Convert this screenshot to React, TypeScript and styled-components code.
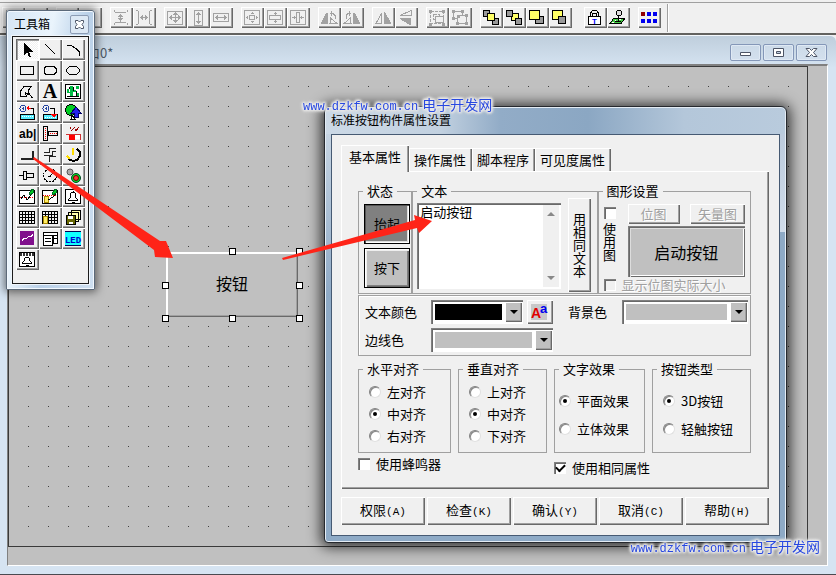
import React, { ReactNode, useState } from "react";
import styled, { createGlobalStyle, css } from "styled-components";

const GlobalStyle = createGlobalStyle`
  * { box-sizing: border-box; }
  body { margin: 0; background: #f0f0f0; overflow: hidden; }
  button, input, textarea, select, legend, label { font: inherit; color: inherit; }
`;

const cjk = `"Noto Sans CJK SC", sans-serif`;

const raised = css`
  box-shadow: inset 1px 1px #fff, inset -1px -1px #696969, inset -2px -2px #a0a0a0;
`;
const sunken = css`
  box-shadow: inset 1px 1px #808080, inset 2px 2px #696969, inset -1px -1px #fff;
`;

const Page = styled.div`
  position: relative;
  display: flex;
  flex-direction: column;
  height: 100vh;
  overflow: hidden;
  font: 13px/14px ${cjk};
  color: #000;
`;

/* ---------- toolbar ---------- */

const Toolbar = styled.div`
  display: flex;
  height: 35px;
  flex: none;
  background: #f0f0f0;
  border-bottom: 2px solid #63625f;
`;
const ToolbarInner = styled.div`
  display: flex;
  flex: 1;
  gap: 8px;
  margin-top: 2px;
  padding: 4px 0 0 2px;
  border-top: 1px solid #a0a0a0;
`;
const ToolGroup = styled.div<{ $apart: boolean }>`
  display: flex;
  margin-left: ${(p) => (p.$apart ? 4 : 0)}px;
`;
const ToolEnd = styled.div`
  width: 2px;
  margin: -3px 0 1px -2px;
  border-left: 1px solid #a0a0a0;
  background: #fff;
`;
const IconButton = styled.button<{ $pressed?: boolean }>`
  display: block;
  width: 23px;
  height: 21px;
  padding: 0;
  border: 0;
  background: ${(p) => (p.$pressed ? "repeating-conic-gradient(#fff 0 25%, #f0f0f0 0 50%) 0 0 / 2px 2px" : "#f0f0f0")};
  ${(p) =>
    p.$pressed
      ? css`box-shadow: inset 1px 1px #696969, inset 2px 2px #a0a0a0, inset -1px -1px #fff;`
      : raised}
`;
const Glyph = styled.svg`
  display: block;
  width: 23px;
  height: 21px;
  fill: none;
  stroke-width: 1;
  shape-rendering: crispEdges;
`;

const G = "#a2a2a2";
const up = (x: number, y: number) => `M${x} ${y}l-2 3h5l-2 -3z`;
const down = (x: number, y: number) => `M${x} ${y}l-2 -3h5l-2 3z`;
const left = (x: number, y: number) => `M${x} ${y}l3 -2v5l-3 -2z`;
const right = (x: number, y: number) => `M${x} ${y}l-3 -2v5l3 -2z`;

const alignIcons: Record<string, ReactNode> = {
  edges: <path stroke={G} d="M4.5 3v15M7 6.5h9M7 13.5h6" />,
  stackV: (
    <>
      <path stroke={G} d="M4.5 3v2M5 5.5h11M17.5 3v2M4.5 18v-2M5 15.5h11M17.5 18v-2M10.5 7v8" />
      <path fill={G} d={up(10, 7) + down(10, 14)} />
    </>
  ),
  stackH: (
    <>
      <path stroke={G} d="M3 3.5h2M5.5 4v13M3 17.5h2M19 3.5h-2M16.5 4v13M19 17.5h-2M7 10.5h8" />
      <path fill={G} d={left(7, 10) + right(15, 10)} />
    </>
  ),
  sizeBoth: (
    <>
      <path stroke={G} d="M3.5 4.5h15v13h-15zM11.5 6v10M5 10.5h12" />
      <path fill={G} d={up(11, 5) + down(11, 16) + left(5, 10) + right(17, 10)} />
    </>
  ),
  sizeV: (
    <>
      <path stroke={G} d="M7.5 3.5h8v15h-8zM11.5 6v10" />
      <path fill={G} d={up(11, 5) + down(11, 17)} />
    </>
  ),
  sizeH: (
    <>
      <path stroke={G} d="M3.5 6.5h15v8h-15zM6 10.5h10" />
      <path fill={G} d={left(5, 10) + right(17, 10)} />
    </>
  ),
  centerBoth: (
    <>
      <path stroke={G} d="M3.5 3.5h15v14h-15zM8.5 8.5h5v4h-5zM11.5 5v2M11.5 14v2M5 10.5h2M15 10.5h2" />
      <path fill={G} d="M10 6h3v1h-3zM10 14h3v1h-3zM6 9h1v3h-1zM15 9h1v3h-1z" />
    </>
  ),
  centerV: (
    <>
      <path stroke={G} d="M3.5 3.5h15v14h-15zM5.5 8.5h11v4h-11zM11.5 5v3M11.5 13v3" />
      <path fill={G} d="M10 6h3v1h-3zM10 14h3v1h-3z" />
    </>
  ),
  centerH: (
    <>
      <path stroke={G} d="M3.5 3.5h15v14h-15zM9.5 5.5h3v10h-3zM5 10.5h4M13 10.5h4" />
      <path fill={G} d="M7 9h1v3h-1zM14 9h1v3h-1z" />
    </>
  ),
  rotateL: (
    <>
      <path fill={G} d="M3 17V16L8 6h2v11z" />
      <path stroke={G} d="M12 16.5h7L12.5 11zM12 6.5h3l2 2v3M13.5 4v5" />
    </>
  ),
  rotateR: (
    <>
      <path fill={G} d="M19 17V16L14 6h-2v11z" />
      <path stroke={G} d="M10 16.5h-7L9.5 11zM10 6.5h-3l-2 2v3M8.5 4v5" />
    </>
  ),
  flipH: (
    <>
      <path stroke={G} d="M4 16.5h5.5V6z" />
      <path fill={G} d="M12 17V5h1l6 11v1z" />
    </>
  ),
  flipV: (
    <>
      <path stroke={G} d="M5 8.5h11V3.5z" />
      <path fill={G} d="M5 11h11v7h-1L5 12z" />
    </>
  ),
  group: (
    <>
      <path stroke={G} d="M4.5 4.5h13v12h-13zM7.5 7.5h6v5h-6z" strokeDasharray="3 1" />
      <path stroke={G} fill="#f0f0f0" d="M9.5 9.5h8v6h-8z" />
      <path fill={G} d="M3 3h3v3h-3zM16 3h3v3h-3zM3 16h3v3h-3zM16 16h3v3h-3z" />
    </>
  ),
  ungroup: (
    <>
      <path stroke={G} d="M4.5 4.5h9v7h-9z" />
      <path stroke={G} fill="#f0f0f0" d="M8.5 8.5h9v8h-9z" />
      <path fill={G} d="M3 3h3v3h-3zM12 3h3v3h-3zM3 10h3v3h-3zM16 7h3v3h-3zM7 15h3v3h-3zM16 15h3v3h-3zM8 8h3v3h-3z" />
    </>
  ),
  front: (
    <g stroke="#000">
      <path fill="#999" d="M3.5 3.5h6v6h-6zM12.5 11.5h6v6h-6z" />
      <path fill="#ff6" d="M7.5 6.5h7v7h-7z" />
    </g>
  ),
  back: (
    <g stroke="#000">
      <path fill="#ff6" d="M8.5 6.5h7v7h-7z" />
      <path fill="#999" d="M3.5 3.5h6v6h-6zM12.5 11.5h6v6h-6z" />
    </g>
  ),
  forward: (
    <g stroke="#000">
      <path fill="#999" d="M9.5 9.5h8v7h-8z" />
      <path fill="#ff6" d="M3.5 3.5h10v9h-10z" />
    </g>
  ),
  backward: (
    <g stroke="#000">
      <path fill="#ff6" d="M3.5 3.5h10v9h-10z" />
      <path fill="#999" d="M9.5 9.5h7v7h-7z" />
    </g>
  ),
  lock: (
    <>
      <path stroke="#000" fill="#fff" d="M4.5 9.5h12v8h-12z" />
      <path stroke="#000" d="M6.5 9V6L8.5 3.5h4L14.5 6v3M8.5 9V6.500h4V9" />
      <text x="10.5" y="17" textAnchor="middle" fontFamily="Liberation Sans" fontWeight="700" fontSize="8" fill="#00f">T</text>
    </>
  ),
  stamp: (
    <>
      <path fill="#4c4" stroke="#000" d="M3 16.5L7 11h11l-4 5.5z" />
      <path fill="#fff" d="M5 15h2v1h-2zM12 12h2v1h-2zM8 13h1v1h-1z" />
      <path fill="#ddd" stroke="#000" d="M10.5 3.5h3l1 1v3l-1 1h-3l-1-1v-3zM11.5 9v5M8 14.5h6" />
    </>
  ),
  grid: (
    <>
      <path fill="#900000" d="M3 5h4v4H3z" />
      <path fill="#0000f0" d="M9 5h4v4H9zM15 5h4v4h-4zM3 12h4v4H3zM9 12h4v4H9zM15 12h4v4h-4z" />
    </>
  ),
};

const toolbarGroups: string[][] = [
  ["edges", "edges"],
  ["edges", "edges"],
  ["stackV", "stackH"],
  ["sizeBoth", "sizeV", "sizeH"],
  ["centerBoth", "centerV", "centerH"],
  ["rotateL", "rotateR"],
  ["flipH", "flipV"],
  ["group", "ungroup"],
  ["front", "back", "forward", "backward"],
  ["lock", "stamp"],
  ["grid"],
];

/* ---------- document window ---------- */

const DocWindow = styled.section`
  display: flex;
  flex-direction: column;
  flex: 1;
  padding: 0 8px 8px 7px;
  border-top: 1px solid #f4f8fc;
  border-bottom: 1px solid #4a4a50;
  border-top-right-radius: 6px;
  background: linear-gradient(#bfcedc 0, #d6e4f2 32px);
`;
const DocTitle = styled.header`
  display: flex;
  align-items: center;
  justify-content: space-between;
  height: 28px;
  flex: none;
  padding: 5px 1px 0 80px;
  color: #4c5866;
`;
const DocControls = styled.div`
  display: flex;
  gap: 2px;
`;
const DocButton = styled.button`
  display: grid;
  place-items: center;
  width: 31px;
  height: 17px;
  padding: 0;
  border: 1px solid #8497b8;
  border-radius: 2px;
  background: linear-gradient(#ccdae8, #d3e0ee);
  box-shadow: inset 0 0 0 1px #dfe9f4;
`;
const Workspace = styled.main`
  flex: 1;
  padding: 0 19px 18px 0;
  border: 1px solid #808080;
  border-width: 2px 1px 1px 1px;
  border-right-color: #fff;
  border-bottom-color: #fff;
  background: #c0c0c0;
`;
const Sheet = styled.div`
  height: 100%;
  border: 1px solid #3a3a3a;
  background: conic-gradient(from 270deg at 1px 1px, #404040 90deg, transparent 0) -1px -1px / 20px 20px #c0c0c0;
`;

/* ---------- placed button on the sheet ---------- */

const PlacedButton = styled.div`
  position: absolute;
  left: 166px;
  top: 252px;
  display: grid;
  place-items: center;
  width: 132px;
  height: 65px;
  padding-bottom: 3px;
  background: #c0c0c0;
  border: 1px solid;
  border-color: #fff #696969 #696969 #fff;
  box-shadow: inset 1px 1px #fff, inset -1px -1px #a0a0a0;
  font-size: 16px;
`;
const Handle = styled.i<{ $x: string; $y: string }>`
  position: absolute;
  left: ${(p) => p.$x};
  top: ${(p) => p.$y};
  width: 7px;
  height: 7px;
  margin: -4px;
  border: 1px solid #000;
  background: #fff;
`;
const near = "-1px";
const mid = "calc(50% + 1px)";
const far = "calc(100% + 3px)";
const handles = [
  [mid, near], [far, near], [near, mid], [far, mid],
  [near, far], [mid, far], [far, far],
];

/* ---------- toolbox ---------- */

const Toolbox = styled.aside`
  position: absolute;
  left: 6px;
  top: 10px;
  padding: 1px 5px 5px;
  border: 1px solid #5c6a7a;
  border-radius: 3px 3px 1px 1px;
  background: linear-gradient(100deg, #d6e6f5 0, #eaf4fc 35%, #b9d0e8 60%, #cfe0f1 100%);
  box-shadow: inset 0 0 0 1px #f2f8fe, 0 0 8px 2px rgba(0, 0, 0, 0.5);
`;
const ToolboxTitle = styled.header`
  display: flex;
  align-items: center;
  justify-content: space-between;
  height: 24px;
  padding: 0 0 0 2px;
  font-size: 12px;
`;
const ToolboxClose = styled.button`
  display: grid;
  place-items: center;
  width: 19px;
  height: 19px;
  padding: 0;
  border: 1px solid #8c9cb4;
  border-radius: 2px;
  background: #dce8f4;
`;
const ToolboxGrid = styled.div`
  display: grid;
  grid-template-columns: repeat(3, 23px);
  grid-auto-rows: 21px;
  padding: 2px 3px 13px;
  border: 1px solid #1c1c1c;
  outline: 1px solid #f0f6fc;
  background: #f0f0f0;
`;

const dark = "#000";
const tools: [string, ReactNode][] = [
  ["选择", <path fill={dark} d="M8 4v12l3-3 2 5h2l-2-5h4z" />],
  ["直线", <path stroke={dark} d="M6 5l10 10" />],
  ["弧线", <path stroke={dark} d="M5 6.5h4l5 3 3 3v4" />],
  ["矩形", <path stroke={dark} d="M4.5 6.5h13v8h-13z" />],
  ["圆角矩形", <path stroke={dark} d="M7 6.5h8l2 2v4l-2 2H7l-2-2v-4z" />],
  ["椭圆", <ellipse stroke={dark} cx="11" cy="10.5" rx="6.5" ry="4.5" />],
  ["多边形", <path stroke={dark} d="M15.5 5.5H8L4.5 10v5.5h6L9.5 11.500M15.5 5.5L12.5 9v3l4 5M9.500 11.500l4 3" />],
  [
    "标签",
    <text x="11" y="17" textAnchor="middle" fontFamily="Liberation Serif" fontWeight="700" fontSize="20" fill={dark}>A</text>,
  ],
  [
    "位图",
    <>
      <path stroke={dark} fill="#fff" d="M3.5 3.5h15v14h-15z" />
      <path fill="#0b4" d="M8 5h3v11H8zM5 8h2v4H5zM5 11h4v1H5zM11 9h3v2h-3zM14 12h3v4h-3zM14 5h3v3h-3z" />
      <path stroke={dark} d="M5 15.5h12M11.5 6v4M14.5 10v5M7.500 6v2" />
    </>,
  ],
  [
    "输入",
    <>
      <circle cx="7" cy="6.5" r="3" stroke="#2244a0" />
      <path stroke="#2244a0" d="M6 6.5h2M7.5 5v3" />
      <path stroke="#f00" d="M11 6.5h4" />
      <path fill="#f00" d="M10 6l3-3v6z" />
      <path stroke={dark} d="M15 6.5h2.5v6" />
      <path stroke={dark} fill="#5ef" d="M4.5 12.5h14v5h-14z" />
      <path stroke="#fff" strokeDasharray="1 1" d="M6 14.5h12" />
    </>,
  ],
  [
    "输出",
    <>
      <circle cx="7" cy="6.5" r="3" stroke="#2244a0" />
      <path stroke="#2244a0" d="M6 6.5h2M7.5 5v3" />
      <path stroke={dark} d="M11 6.5h4.5v6" />
      <path stroke={dark} fill="#5ef" d="M4.5 12.5h14v5h-14z" />
      <path stroke="#fff" strokeDasharray="1 1" d="M6 15.5h12" />
      <path fill="#f00" d="M12 12h6l-3 4z" />
    </>,
  ],
  [
    "图元",
    <>
      <circle cx="9" cy="8" r="5.5" fill="#0c2" stroke={dark} />
      <path fill="#22e" stroke="#006" d="M14 5l5 6h-3v4h-4v-4H9z" />
      <path stroke={dark} fill="#fff" d="M9.5 12.5l4 5H9z" />
    </>,
  ],
  [
    "输入框",
    <text x="3" y="15" fontFamily="Liberation Sans" fontWeight="700" fontSize="12" fill={dark}>ab|</text>,
  ],
  [
    "滑动",
    <>
      <path stroke={dark} d="M4.5 3.5h4v14h-4zM9.5 8.5h9v4h-9z" />
      <path stroke="#f00" strokeDasharray="1 1" d="M6.5 5v12M11 10.5h7" />
    </>,
  ],
  [
    "百分比",
    <>
      <path stroke="#c33" d="M4 11.5h14.500v5" />
      <path fill="#f00" d="M7 12h6v5H7z" />
      <path fill="#fff" d="M13 12h5v4h-5z" />
      <path stroke="#900" d="M8.5 4v2M9 8l4-4M13.5 6v2M14 8l3-4" />
    </>,
  ],
  ["标准按钮", <path stroke="#222" strokeWidth="2" d="M5 15h12V7" />],
  ["管道", <path stroke="#222" d="M17 4.500H10.500V8.500H5M17 7.500h-4v4H5M17 12.500H10.500V17.500" />],
  [
    "旋转仪表",
    <>
      <path stroke={dark} strokeWidth="2" d="M15 5l3 3v4l-3 4-4 1-5-2" />
      <path stroke="#fd0" strokeWidth="2" d="M11 4v7M5 12l3 3" />
    </>,
  ],
  ["滑块", <path stroke={dark} d="M3 10.5h4M7.5 6.5h3v8h-3zM10.5 8.5h7v4h-7z" />],
  [
    "仪表",
    <>
      <circle cx="11" cy="10.5" r="6.5" stroke={dark} strokeDasharray="2 1" />
      <path stroke={dark} d="M11 11l3-3M9 11h3" />
    </>,
  ],
  [
    "指示灯",
    <g shapeRendering="auto">
      <circle cx="8" cy="7" r="3" fill="#aaa" stroke="#555" />
      <circle cx="14" cy="13" r="4.500" fill="#0d2" stroke="#042" />
      <circle cx="14" cy="13" r="2.500" fill="#f33" stroke="#600" />
    </g>,
  ],
  [
    "实时曲线",
    <>
      <path stroke={dark} fill="#fff" d="M3.5 4.5h15v13h-15z" />
      <path stroke="#f00" strokeDasharray="1 1" d="M4 11.5h14" />
      <path stroke={dark} d="M5 13l3-4 3 5 4-5" />
      <path fill="#0c2" stroke="#062" d="M13 8l3-5h2l-1 4-3 2z" />
    </>,
  ],
  [
    "历史曲线",
    <>
      <path stroke={dark} fill="#fff" d="M3.5 4.5h15v13h-15z" />
      <path stroke="#f00" strokeDasharray="1 1" d="M4 9.5h14" />
      <path fill="#fe6" stroke="#a80" d="M5.5 10.5h4v6h-4z" />
      <path stroke={dark} d="M9 14l5-3 3-3" />
      <path fill="#0c2" stroke="#062" d="M13 8l3-5h2l-1 4-3 2z" />
    </>,
  ],
  [
    "报警",
    <>
      <path stroke={dark} fill="#fff" d="M3.5 3.5h15v14h-15z" />
      <path stroke={dark} d="M11 4.500v2M9.500 6.500h3l1 1v4l2 2v1h-9v-1l2-2v-4zM10 16.500h3" />
    </>,
  ],
  ["表格", <path stroke={dark} d="M3.5 4.5h15v12h-15zM3 7.5h16M3 10.5h16M3 13.5h16M6.5 4v13M9.5 4v13M12.5 4v13M15.5 4v13" />],
  [
    "历史表格",
    <>
      <path stroke={dark} d="M3.5 4.5h15v12h-15zM3 7.5h16M3 10.5h16M3 13.5h16M6.5 4v13M9.5 4v13M12.5 4v13M15.5 4v13" />
      <path fill="#fe6" stroke="#a80" d="M4.5 9.5h4v7h-4z" />
    </>,
  ],
  [
    "存盘",
    <>
      <path fill="#ffa" stroke={dark} d="M9.5 3.5h9v9h-9zM6.5 5.5h10v9h-10z" />
      <path fill="#660" stroke={dark} d="M4.5 8.5h9v9h-9z" />
      <path fill="#fff" d="M6 9h5v3H6zM7 15h4v2H7z" />
    </>,
  ],
  [
    "曲线",
    <>
      <path fill="#80108c" d="M4 3h14v14H4z" />
      <path stroke="#fff" d="M6 13l2-3 2 1 3-3 2 1 2-3" />
    </>,
  ],
  [
    "组合框",
    <>
      <path stroke={dark} fill="#fff" d="M4.5 4.5h14v3h-14zM4.5 7.5h9v10h-9zM14.5 7.5h4v8h-4z" />
      <path stroke={dark} d="M6 10.5h6M6 13.5h6M15 10.5h3" />
    </>,
  ],
  [
    "数码管",
    <>
      <path fill="#1ff" d="M3 3h16v15h-16z" />
      <path stroke="#005" d="M3 3.5h16M3 17.500h16" />
      <text x="11" y="15" textAnchor="middle" fontFamily="Liberation Mono" fontWeight="700" fontSize="9" fill="#00c">LED</text>
    </>,
  ],
  [
    "报警显示",
    <>
      <path stroke={dark} fill="#fff" d="M3.5 3.5h15v14h-15z" />
      <path stroke="#333" strokeWidth="3" strokeDasharray="2 1" d="M4 5.500h15" />
      <path stroke={dark} d="M9.500 8.500h3l1 1v2l2 2v1h-9v-1l2-2v-2zM10 16.500h3" />
    </>,
  ],
];

/* ---------- property dialog ---------- */

const Dialog = styled.section`
  position: absolute;
  left: 324px;
  top: 106px;
  width: 463px;
  padding: 0 6px 6px;
  border: 1px solid #26292e;
  border-radius: 6px 6px 4px 4px;
  background:
    linear-gradient(#bccbdd, #d0dcea) right 27px / 6px 98px no-repeat,
    linear-gradient(#c6d4e2, #8faac6) left 27px / 6px 160px no-repeat,
    linear-gradient(90deg, #ccd9e6 0, #c2d1e0 25%, #92acc7 38%, #8ba7c3 57%, #b4c7da 78%, #b9cbdd 100%) top / 100% 28px no-repeat,
    #8eaac6;
  box-shadow: inset 0 0 0 1px #e4ecf4, 0 1px 14px 3px rgba(0, 0, 0, 0.75);
`;
const DialogTitle = styled.h1`
  height: 27px;
  margin: 0;
  font: 12px/25px ${cjk};
`;
const DialogBody = styled.form`
  padding: 10px 10px 10px 9px;
  border: 1px solid #465a73;
  background: #f0f0f0;
`;
const Tabs = styled.div`
  display: flex;
  align-items: flex-end;
`;
const Tab = styled.button<{ $active: boolean }>`
  position: relative;
  height: ${(p) => (p.$active ? 27 : 23)}px;
  margin-bottom: ${(p) => (p.$active ? -1 : 0)}px;
  padding: ${(p) => (p.$active ? "0 8px 4px" : "0 6px 0 5px")};
  border: 0;
  background: #f0f0f0;
  box-shadow: inset 1px 1px #fff, inset -1px 0 #696969, inset -2px 0 #a0a0a0;
  white-space: nowrap;
`;
const TabPage = styled.div`
  padding: 13px 18px 14px 17px;
  box-shadow: inset 1px 1px #fff, inset -1px -1px #696969, inset -2px -2px #a0a0a0;
`;
const Group = styled.fieldset`
  min-width: 0;
  margin: 0;
  padding: 0;
  border: 1px solid #a0a0a0;
`;
const Legend = styled.legend`
  margin-left: 4px;
  padding: 0 4px;
  line-height: 14px;
`;
const TopRow = styled.div`
  display: grid;
  grid-template-columns: 54fr 185fr 153fr;
  height: 110px;
`;
const StateList = styled.div`
  display: grid;
  gap: 4px;
  padding: 6px 1px 0 5px;
`;
const StateButton = styled.button<{ $dark?: boolean }>`
  height: 40px;
  padding: 0;
  border: 1px solid #000;
  background: ${(p) => (p.$dark ? "#808080" : "#c0c0c0")};
  ${(p) =>
    p.$dark
      ? css`box-shadow: inset 1px 1px #555, inset -1px -1px #fff, inset -2px -2px #ddd;`
      : css`box-shadow: inset 1px 1px #fff, inset 2px 2px #eee, inset -1px -1px #696969, inset -2px -2px #808080;`}
`;
const TextRow = styled.div`
  display: flex;
  justify-content: space-between;
  padding: 0 6px 0 4px;
`;
const TextBox = styled.div`
  display: flex;
  width: 144px;
  height: 86px;
  margin-top: 5px;
  padding: 2px;
  background: #fff;
  ${sunken}
`;
const TextInput = styled.textarea`
  flex: 1;
  min-width: 0;
  padding: 0 1px;
  border: 0;
  outline: 0;
  resize: none;
  background: none;
`;
const ScrollRail = styled.div`
  display: flex;
  flex-direction: column;
  justify-content: space-between;
  width: 16px;
  padding: 6px 3px;
  background: #f0f0f0;
`;
const VerticalButton = styled.button`
  width: 23px;
  height: 94px;
  padding: 0;
  border: 0;
  background: #f0f0f0;
  ${raised}
  writing-mode: vertical-rl;
`;
const GraphicGrid = styled.div`
  display: grid;
  grid-template-columns: 12px 1fr;
  column-gap: 12px;
  padding: 6px 5px 0;
`;
const TallCheck = styled.label`
  display: flex;
  flex-direction: column;
  align-items: center;
  gap: 3px;
  padding-top: 3px;
  white-space: pre-line;
  line-height: 13px;
`;
const Preview = styled.div`
  display: grid;
  place-items: center;
  height: 51px;
  margin-top: 2px;
  background: #c0c0c0;
  box-shadow: inset 1px 1px #808080, inset 2px 2px #696969, inset 3px 3px #ddd, inset -1px -1px #696969, inset -2px -2px #fff;
  font-size: 16px;
`;
const ImageButtons = styled.div`
  display: flex;
  justify-content: space-between;
`;
const ImageButton = styled.button`
  height: 20px;
  padding: 0 8px;
  min-width: 52px;
  border: 0;
  background: #f0f0f0;
  color: #a0a0a0;
  text-shadow: 1px 1px #fff;
  ${raised}
`;
const RealSize = styled.label`
  grid-column: 1 / -1;
  display: flex;
  align-items: center;
  gap: 6px;
  margin-top: 1px;
  color: #a0a0a0;
  text-shadow: 1px 1px #fff;
  white-space: nowrap;
`;
const CheckInput = styled.input.attrs({ type: "checkbox" })`
  appearance: none;
  display: grid;
  place-items: center;
  flex: none;
  width: 12px;
  height: 12px;
  margin: 0;
  background: #fff;
  ${sunken}
  &:disabled { background: #f0f0f0; }
  &:checked::before {
    content: "";
    width: 7px;
    height: 4px;
    border: solid #000;
    border-width: 0 0 2px 2px;
    transform: translateY(-1px) rotate(-45deg);
  }
`;
const ColorGroup = styled.div`
  display: grid;
  grid-template-columns: 62px 92px 26px 61px 1fr;
  row-gap: 4px;
  column-gap: 4px;
  align-items: center;
  margin-top: 1px;
  padding: 4px 2px 3px 6px;
  border: 1px solid #a0a0a0;
  box-shadow: inset 1px 1px #fff;
`;
const ColorLabel = styled.label<{ $inset?: boolean }>`
  padding-left: ${(p) => (p.$inset ? 11 : 0)}px;
  white-space: nowrap;
`;
const ColorBox = styled.div<{ $wide?: boolean }>`
  grid-column: ${(p) => (p.$wide ? "span 2" : "auto")};
  display: flex;
  height: 24px;
  padding: 2px 1px 2px 2px;
  background: #fff;
  ${sunken}
`;
const ColorSelect = styled.select`
  appearance: none;
  flex: 1;
  min-width: 0;
  margin: 2px 3px 2px 2px;
  padding: 0;
  border: 0;
  border-radius: 0;
  background: ${(p) => String(p.defaultValue)};
`;
const DropArrow = styled.span`
  display: grid;
  place-items: center;
  width: 17px;
  background: #c0c0c0;
  ${raised}
`;
const FontButton = styled.button`
  display: grid;
  place-items: center;
  height: 24px;
  padding: 0;
  border: 0;
  background: #f0f0f0;
  ${raised}
`;
const OptionGrid = styled.div<{ $top: number }>`
  display: grid;
  grid-template-columns: 93fr 89fr 91fr 99fr;
  column-gap: 7px;
  margin-top: ${(p) => p.$top}px;
`;
const RadioGroup = styled(Group)`
  height: 91px;
`;
const RadioList = styled.div<{ $loose: boolean }>`
  display: grid;
  row-gap: ${(p) => (p.$loose ? 14 : 8)}px;
  padding: ${(p) => (p.$loose ? "18px 0 0 4px" : "9px 0 0 10px")};
`;
const IndentedList = styled(RadioList)`
  padding-left: 10px;
`;
const Choice = styled.label<{ $side?: "start" | "end"; $span?: boolean }>`
  display: flex;
  align-items: center;
  align-self: ${(p) => p.$side ?? "auto"};
  grid-column: ${(p) => (p.$span ? "span 2" : "auto")};
  gap: 6px;
  white-space: nowrap;
`;
const RadioInput = styled.input.attrs({ type: "radio" })`
  appearance: none;
  display: grid;
  place-items: center;
  flex: none;
  width: 12px;
  height: 12px;
  margin: 0;
  border: 1px solid;
  border-color: #808080 #e0e0e0 #e0e0e0 #808080;
  border-radius: 50%;
  background: #fff;
  box-shadow: inset 1px 1px #888;
  &:checked::before {
    content: "";
    width: 4px;
    height: 4px;
    border-radius: 50%;
    background: #000;
  }
`;
const BottomChecks = styled(OptionGrid)`
  height: 18px;
`;
const Footer = styled.footer`
  display: grid;
  grid-template-columns: repeat(5, 1fr);
  gap: 2px;
  margin-top: 8px;
`;
const FooterButton = styled.button`
  height: 28px;
  padding: 0;
  border: 0;
  background: #f0f0f0;
  ${raised}
`;
const Key = styled.span`
  font: 11px/14px "Liberation Mono", monospace;
`;

/* ---------- overlays ---------- */

const Arrows = styled.svg`
  position: absolute;
  left: 0;
  top: 0;
  width: 100%;
  height: 100%;
  pointer-events: none;
  fill: #ff2418;
`;
const Watermark = styled.div<{ $corner?: boolean }>`
  position: absolute;
  ${(p) => (p.$corner ? "right: 16px; bottom: 16px;" : "left: 303px; top: 94px;")}
  display: flex;
  align-items: baseline;
  gap: 4px;
  line-height: 20px;
  font-size: 14px;
  color: #2848e0;
  white-space: nowrap;
  filter: drop-shadow(0 0 1px #eee) drop-shadow(0 0 1px #e8e8e8) drop-shadow(0 0 1px #e4e4e4) drop-shadow(0 0 1px #ddd);
`;
const Site = styled.span`
  font: 12px/20px "Liberation Mono", monospace;
`;

const Mark = ({ corner }: { corner?: boolean }) => (
  <Watermark $corner={corner}>
    <Site>www.dzkfw.com.cn</Site>
    <span>电子开发网</span>
  </Watermark>
);

const ColorPicker = ({ id, value, wide }: { id: string; value: string; wide?: boolean }) => (
  <ColorBox $wide={wide}>
    <ColorSelect id={id} defaultValue={value}>
      <option value={value} />
    </ColorSelect>
    <DropArrow>
      <svg width="8" height="4" aria-hidden><path d="M0 0h8L4 4z" /></svg>
    </DropArrow>
  </ColorBox>
);

const radioGroups = [
  { title: "水平对齐", options: ["左对齐", "中对齐", "右对齐"], selected: 1 },
  { title: "垂直对齐", options: ["上对齐", "中对齐", "下对齐"], selected: 1 },
  { title: "文字效果", options: ["平面效果", "立体效果"], selected: 0 },
  { title: "按钮类型", options: ["3D按钮", "轻触按钮"], selected: 0, indent: true },
];
const footerButtons = [["权限", "A"], ["检查", "K"], ["确认", "Y"], ["取消", "C"], ["帮助", "H"]];
const tabNames = ["基本属性", "操作属性", "脚本程序", "可见度属性"];

const PropertyDialog = () => {
  const [tab, setTab] = useState(0);
  return (
    <Dialog role="dialog" aria-labelledby="dialog-title">
      <DialogTitle id="dialog-title">标准按钮构件属性设置</DialogTitle>
      <DialogBody onSubmit={(e) => e.preventDefault()}>
        <Tabs role="tablist">
          {tabNames.map((name, i) => (
            <Tab key={name} type="button" role="tab" aria-selected={tab === i} $active={tab === i} onClick={() => setTab(i)}>
              {name}
            </Tab>
          ))}
        </Tabs>
        <TabPage>
          <TopRow>
            <Group>
              <Legend>状态</Legend>
              <StateList>
                <StateButton type="button" $dark>抬起</StateButton>
                <StateButton type="button">按下</StateButton>
              </StateList>
            </Group>
            <Group>
              <Legend>文本</Legend>
              <TextRow>
                <TextBox>
                  <TextInput aria-label="文本" defaultValue="启动按钮" />
                  <ScrollRail>
                    <svg width="10" height="5" aria-hidden><path fill="#888" d="M1 5l4-4 4 4z" /></svg>
                    <svg width="10" height="5" aria-hidden><path fill="#888" d="M1 0l4 4 4-4z" /></svg>
                  </ScrollRail>
                </TextBox>
                <VerticalButton type="button">用相同文本</VerticalButton>
              </TextRow>
            </Group>
            <Group>
              <Legend>图形设置</Legend>
              <GraphicGrid>
                <TallCheck>
                  <CheckInput />
                  {"使\n用\n图"}
                </TallCheck>
                <div>
                  <ImageButtons>
                    <ImageButton type="button" disabled>位图</ImageButton>
                    <ImageButton type="button" disabled>矢量图</ImageButton>
                  </ImageButtons>
                  <Preview>启动按钮</Preview>
                </div>
                <RealSize>
                  <CheckInput disabled />
                  显示位图实际大小
                </RealSize>
              </GraphicGrid>
            </Group>
          </TopRow>
          <ColorGroup>
            <ColorLabel htmlFor="text-color">文本颜色</ColorLabel>
            <ColorPicker id="text-color" value="#000000" />
            <FontButton type="button" aria-label="字体">
              <svg width="20" height="22" aria-hidden>
                <rect x="1" y="3" width="16" height="16" fill="#c8c8c8" />
                <text x="1" y="17" fontFamily="Liberation Sans" fontWeight="700" fontSize="14" fill="#e00000">A</text>
                <text x="10" y="12" fontFamily="Liberation Sans" fontWeight="700" fontSize="13" fill="#0000f0">a</text>
              </svg>
            </FontButton>
            <ColorLabel htmlFor="back-color" $inset>背景色</ColorLabel>
            <ColorPicker id="back-color" value="#c0c0c0" />
            <ColorLabel htmlFor="line-color">边线色</ColorLabel>
            <ColorPicker id="line-color" value="#c0c0c0" wide />
          </ColorGroup>
          <OptionGrid $top={6}>
            {radioGroups.map((g) => {
              const List = g.indent ? IndentedList : RadioList;
              return (
                <RadioGroup key={g.title}>
                  <Legend>{g.title}</Legend>
                  <List $loose={g.options.length === 2}>
                    {g.options.map((o, i) => (
                      <Choice key={o}>
                        <RadioInput name={g.title} defaultChecked={i === g.selected} />
                        {o}
                      </Choice>
                    ))}
                  </List>
                </RadioGroup>
              );
            })}
          </OptionGrid>
          <BottomChecks $top={4}>
            <Choice $side="start" $span>
              <CheckInput />
              使用蜂鸣器
            </Choice>
            <Choice $side="end" $span>
              <CheckInput defaultChecked />
              使用相同属性
            </Choice>
          </BottomChecks>
        </TabPage>
        <Footer>
          {footerButtons.map(([name, key]) => (
            <FooterButton key={key} type="button">
              {name}<Key>({key})</Key>
            </FooterButton>
          ))}
        </Footer>
      </DialogBody>
    </Dialog>
  );
};

export default function App() {
  return (
    <Page>
      <GlobalStyle />
      <Toolbar role="toolbar">
        <ToolbarInner>
          {toolbarGroups.map((group, i) => (
            <ToolGroup key={i} $apart={group[0] === "lock"}>
              {group.map((name, j) => (
                <IconButton key={j} type="button" aria-label={name}>
                  <Glyph viewBox="0 0 23 21">{alignIcons[name]}</Glyph>
                </IconButton>
              ))}
            </ToolGroup>
          ))}
          <ToolEnd />
        </ToolbarInner>
      </Toolbar>
      <DocWindow>
        <DocTitle>
          <span>口0*</span>
          <DocControls>
            <DocButton type="button" aria-label="最小化">
              <svg width="13" height="11" aria-hidden><path d="M1.500 5.500h10v3h-10z" fill="#fff" stroke="#4d5566" /></svg>
            </DocButton>
            <DocButton type="button" aria-label="还原">
              <svg width="13" height="11" aria-hidden>
                <path d="M1.500 1.500h10v8h-10z" fill="#fff" stroke="#4d5566" />
                <path d="M4.500 4.500h4v2h-4z" fill="#c0cfe0" stroke="#4d5566" />
              </svg>
            </DocButton>
            <DocButton type="button" aria-label="关闭">
              <svg width="13" height="11" aria-hidden>
                <path d="M1 1.500h3.500l2 2 2-2H12L8.500 5.500l3.500 4H8.500l-2-2-2 2H1l3.500-4z" fill="#fff" stroke="#4d5566" />
              </svg>
            </DocButton>
          </DocControls>
        </DocTitle>
        <Workspace>
          <Sheet />
        </Workspace>
      </DocWindow>

      <PlacedButton>
        按钮
        {handles.map(([x, y]) => <Handle key={x + y} $x={x} $y={y} />)}
      </PlacedButton>

      <Toolbox>
        <ToolboxTitle>
          工具箱
          <ToolboxClose type="button" aria-label="关闭工具箱">
            <svg width="9" height="9" aria-hidden>
              <path d="M.5 .5h2.500l1.500 1.500L6 .5h2.500v2L7 4.500l1.500 2v2H6L4.500 7 3 8.500H.5v-2L2 4.500.5 2.500z" fill="#fff" stroke="#4d5566" />
            </svg>
          </ToolboxClose>
        </ToolboxTitle>
        <ToolboxGrid>
          {tools.map(([name, drawing], i) => (
            <IconButton key={name} type="button" aria-label={name} $pressed={i === 0}>
              <Glyph viewBox="0 0 23 21">{drawing}</Glyph>
            </IconButton>
          ))}
        </ToolboxGrid>
      </Toolbox>

      <PropertyDialog />

      <Arrows aria-hidden>
        <path d="M34 157L160 241L166 241L173 258L155 257L154 250L33 159z" />
        <path d="M282 258L415 220L414 215L432 221L419 233L417 228L283 260z" />
      </Arrows>
      <Mark />
      <Mark corner />
    </Page>
  );
}
